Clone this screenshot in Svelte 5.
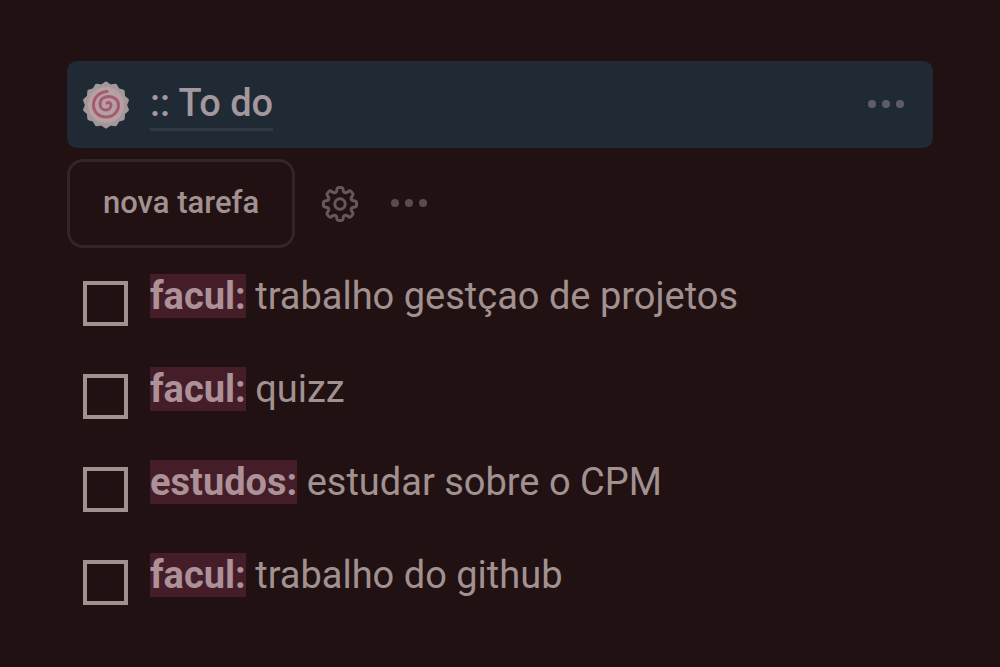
<script>
    let tasks = $state([
        { tag: "facul:", text: "trabalho gestçao de projetos", done: false },
        { tag: "facul:", text: "quizz", done: false },
        { tag: "estudos:", text: "estudar sobre o CPM", done: false },
        { tag: "facul:", text: "trabalho do github", done: false }
    ]);

    const rotate = (x, y, angle) => {
        const c = Math.cos(angle);
        const s = Math.sin(angle);
        return `${(x * c - y * s).toFixed(2)} ${(x * s + y * c).toFixed(2)}`;
    };

    // one tooth, turned eight times round the centre
    const gear =
        Array.from({ length: 8 }, (_, i) => {
            const p = (x, y) => rotate(x, y, (i * Math.PI) / 4);
            return `${i ? "L" : "M"}${p(-3.4, -12.6)} L${p(-3, -15)} Q${p(-2.6, -16.6)} ${p(-1, -16.6)} L${p(1, -16.6)} Q${p(2.6, -16.6)} ${p(3, -15)} L${p(3.4, -12.6)} Q${p(4.5, -10.8)} ${p(6.5, -11.3)}`;
        }).join(" ") + "Z";

    // scalloped edge of the fish cake
    const edge = Array.from({ length: 28 }, (_, i) =>
        rotate(0, i % 2 ? -19.5 : -22, (i * Math.PI) / 14)
    ).join(" ");
</script>

{#snippet dots()}
    <svg width="38" height="10" viewBox="0 0 38 10" aria-hidden="true">
        <circle cx="5" cy="4" r="4" />
        <circle cx="19" cy="4" r="4" />
        <circle cx="33" cy="4" r="4" />
    </svg>
{/snippet}

<main>
    <header>
        <svg class="cake" width="48" height="48" viewBox="-24 -24 48 48" aria-hidden="true">
            <polygon points={edge} />
            <circle r="18" />
            <path d="M1 -13.5C-7 -13 -12.5 -7 -12.5 0C-12.5 7 -7 12 0 12C8 12 12.5 6 12.5 0C12.5 -5 8 -8.500 3 -8.500C-2 -8.500 -6 -6 -6 -1C-6 3 -3 5 0 5C3 5 5 2.500 5 0C5 -2 3 -3 1 -2" />
        </svg>
        <h1>:: To do</h1>
        <button class="more" aria-label="Mais opções">{@render dots()}</button>
    </header>

    <div class="toolbar">
        <button class="new-task">nova tarefa</button>
        <button class="settings" aria-label="Configurações">
            <svg width="38" height="38" viewBox="-19 -19 38 38" aria-hidden="true">
                <path d={gear} />
                <circle r="5.2" />
            </svg>
        </button>
        <button class="more" aria-label="Mais opções">{@render dots()}</button>
    </div>

    <ul>
        {#each tasks as task}
            <li>
                <label>
                    <input type="checkbox" bind:checked={task.done} />
                    <span><strong>{task.tag}</strong> {task.text}</span>
                </label>
            </li>
        {/each}
    </ul>
</main>

<style>
    :global(body) {
        background: #211112;
    }
    main {
        padding: 61px 67px 48px;
        color: #a29191;
        font-family: Roboto, "Liberation Sans", sans-serif;
    }
    header {
        display: flex;
        align-items: center;
        height: 87px;
        padding: 0 28px 0 15px;
        box-sizing: border-box;
        border-radius: 10px;
        background: #202a35;
    }
    .cake {
        margin-right: 20px;
    }
    .cake polygon {
        fill: #a39799;
        stroke: #a39799;
        stroke-width: 3;
        stroke-linejoin: round;
    }
    .cake circle {
        fill: #b6a0a3;
    }
    .cake path {
        fill: none;
        stroke: #a45b70;
        stroke-width: 3;
        stroke-linecap: round;
    }
    h1 {
        margin: 0;
        border-bottom: 3px solid #303a46;
        color: #a2989e;
        font-size: 38px;
        font-weight: 500;
        line-height: 50px;
    }
    button {
        padding: 0;
        border: none;
        background: none;
        color: inherit;
        font: inherit;
        cursor: pointer;
    }
    button svg {
        display: block;
    }
    .more {
        fill: #5a4b4d;
    }
    header .more {
        margin-left: auto;
        fill: #5e5e6b;
    }
    .toolbar {
        display: flex;
        align-items: center;
        margin-top: 11px;
    }
    .new-task {
        height: 89px;
        padding: 0 33px 2px;
        border: 3px solid #342526;
        border-radius: 16px;
        font-size: 31px;
        font-weight: 500;
    }
    .settings {
        margin: 0 31px 0 26px;
    }
    .settings svg {
        fill: none;
        stroke: #665758;
        stroke-width: 3;
        stroke-linejoin: round;
    }
    ul {
        margin: 24px 0 0;
        padding: 0 16px;
        list-style: none;
    }
    li {
        margin-bottom: 39px;
    }
    label {
        display: flex;
        align-items: flex-start;
        font-size: 38px;
        line-height: 48px;
        min-height: 54px;
    }
    input {
        appearance: none;
        flex: none;
        width: 45px;
        height: 45px;
        margin: 9px 22px 0 0;
        border: 4px solid #a29191;
    }
    input:checked {
        background: #a29191;
    }
    strong {
        background: #451d28;
        color: #ac9298;
        font-weight: 700;
    }
</style>
